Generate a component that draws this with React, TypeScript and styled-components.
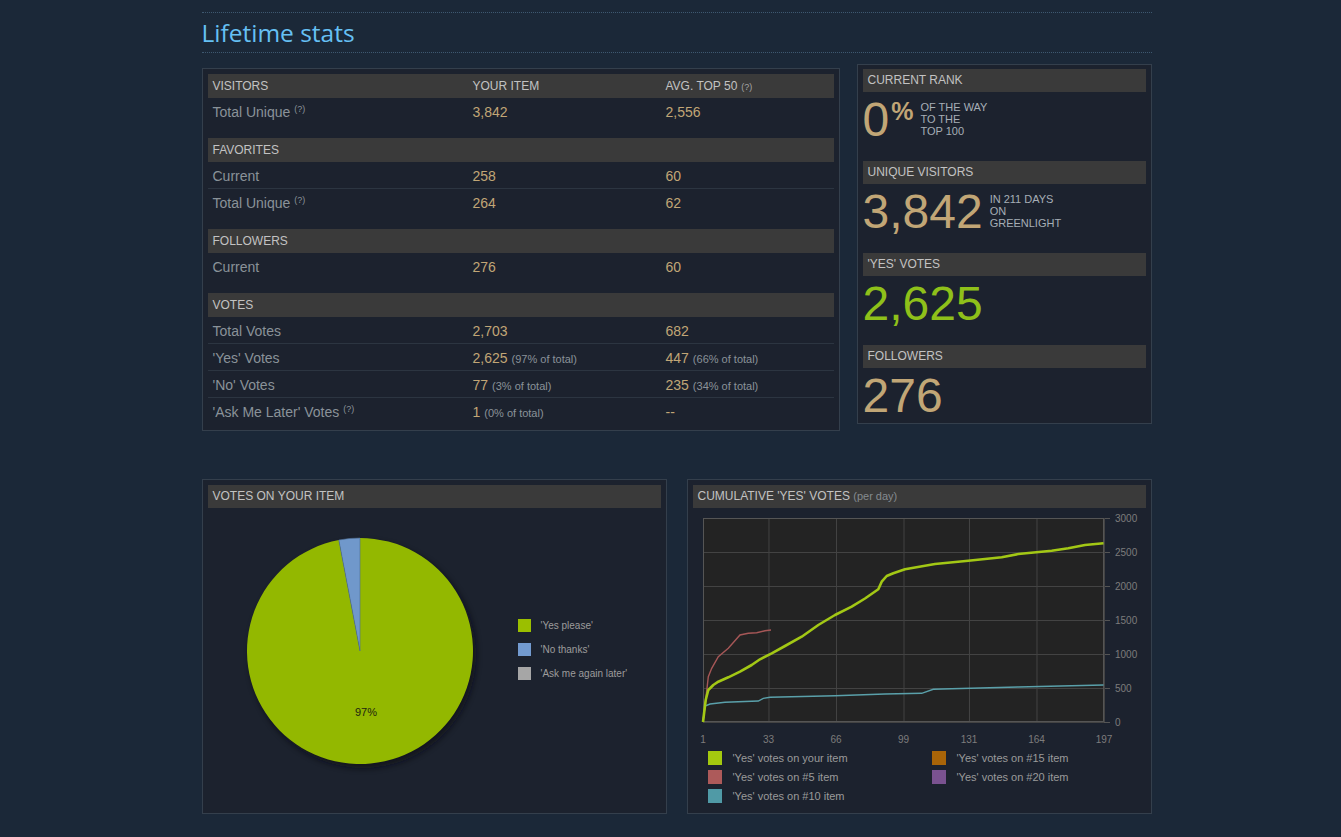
import React from 'react';
import styled, { createGlobalStyle } from 'styled-components';

const GlobalStyle = createGlobalStyle`
  body {
    margin: 0;
    background: #1b2838;
    font-family: "Liberation Sans", Arial, sans-serif;
  }
`;

//전체 페이지
const Page = styled.div`
  box-sizing: border-box;
  width: 962px;
  margin: 0 auto;
  padding: 12px 0 24px 12px;
`;

const TitleBar = styled.div`
  height: 39px;
  border-top: 1px dotted #3e5870;
  border-bottom: 1px dotted #3e5870;
`;

const Title = styled.h2`
  margin: 0;
  font-family: "Open Sans", "DejaVu Sans", sans-serif;
  font-size: 24.5px;
  font-weight: normal;
  line-height: 39px;
  color: #66c0f4;
`;

const TopRow = styled.div`
  display: grid;
  grid-template-columns: 638px 295px;
  justify-content: space-between;
  align-items: start;
  margin-top: 11px;
`;

const BottomRow = styled.div`
  display: grid;
  grid-template-columns: 465px 465px;
  justify-content: space-between;
  margin-top: 48px;
`;

const Panel = styled.section`
  box-sizing: border-box;
  border: 1px solid #343f4c;
  background: #1c222e;
  padding: 5px;
`;

const TablePanel = styled(Panel)`
  margin-top: 4px;
`;

const StatsPanel = styled(Panel)`
  padding-top: 4px;
`;

const ChartPanel = styled(Panel)`
  height: 335px;
`;

//회색 헤더 바
const Bar = styled.div<{ $h?: number }>`
  height: ${(p) => p.$h ?? 23}px;
  line-height: ${(p) => p.$h ?? 23}px;
  padding: 0 5px;
  background: #3a3a3a;
  color: #c2c2c2;
  font-size: 12px;
  text-transform: uppercase;
  white-space: nowrap;
`;

const TableBar = styled(Bar)`
  display: grid;
  grid-template-columns: 260px 193px 1fr;
`;

const PerDay = styled.span`
  font-size: 11px;
  color: #858a8f;
  text-transform: none;
`;

const Group = styled.div`
  & + & {
    margin-top: 13px;
  }
`;

const Row = styled.div`
  display: grid;
  grid-template-columns: 260px 193px 1fr;
  align-items: center;
  height: 26px;
  padding: 1px 5px 0;
  box-sizing: border-box;
  height: 27px;
  border-bottom: 1px solid #2c3541;
  &:last-child {
    border-bottom-color: transparent;
  }
`;

const Label = styled.span`
  font-size: 14px;
  color: #8a9299;
`;

const Hint = styled.span<{ $raised?: boolean }>`
  font-size: 9px;
  margin-left: 4px;
  color: ${(p) => (p.$raised ? '#8a9299' : '#a6a6a6')};
  vertical-align: ${(p) => (p.$raised ? '5px' : 'baseline')};
`;

const Value = styled.span`
  font-size: 14px;
  color: #c1a676;
`;

const Note = styled.span`
  font-size: 11px;
  margin-left: 4px;
  color: #8a9299;
`;

//오른쪽 요약 패널
const StatSection = styled.div`
  & + & {
    margin-top: 19px;
  }
`;

const StatBody = styled.div`
  display: flex;
  align-items: flex-start;
  height: 50px;
  padding-top: 2px;
  box-sizing: border-box;
`;

const BigNumber = styled.span<{ $color: string }>`
  font-size: 48px;
  line-height: 52px;
  color: ${(p) => p.$color};
`;

const Percent = styled.span`
  font-size: 25px;
  font-weight: bold;
  line-height: 24px;
  margin: 5px 0 0 2px;
  color: #c1a676;
`;

const SmallText = styled.div`
  margin: 7px 0 0 7px;
  font-size: 11px;
  line-height: 12px;
  color: #a6aeb6;
  text-transform: uppercase;
`;

//파이 차트
const PieBody = styled.div`
  display: flex;
  align-items: center;
  height: 300px;
  padding-bottom: 14px;
  box-sizing: border-box;
`;

const PieSvg = styled.svg`
  display: block;
  margin-left: 7px;
  flex: none;
`;

const PieLegend = styled.ul`
  list-style: none;
  margin: 0 0 4px 13px;
  padding: 0;
  display: flex;
  flex-direction: column;
  gap: 11px;
`;

const PieLegendItem = styled.li`
  display: flex;
  align-items: center;
  gap: 10px;
  font-size: 10px;
  color: #9c9c9c;
`;

const Swatch = styled.span<{ $color: string; $size: number }>`
  width: ${(p) => p.$size}px;
  height: ${(p) => p.$size}px;
  background: ${(p) => p.$color};
  flex: none;
`;

//누적 차트
const LineSvg = styled.svg`
  display: block;
`;

const LineLegend = styled.div`
  display: grid;
  grid-template-columns: 224px 1fr;
  grid-auto-rows: 19px;
  margin-top: 2px;
  padding-left: 15px;
`;

const LineLegendItem = styled.div`
  display: flex;
  align-items: center;
  gap: 11px;
  font-size: 11px;
  color: #9a9a9a;
`;

type TableRow = {
  label: string;
  hint?: boolean;
  mine: string;
  mineNote?: string;
  top: string;
  topNote?: string;
};

const groups: { title: string; rows: TableRow[] }[] = [
  { title: 'Visitors', rows: [{ label: 'Total Unique', hint: true, mine: '3,842', top: '2,556' }] },
  {
    title: 'Favorites',
    rows: [
      { label: 'Current', mine: '258', top: '60' },
      { label: 'Total Unique', hint: true, mine: '264', top: '62' },
    ],
  },
  { title: 'Followers', rows: [{ label: 'Current', mine: '276', top: '60' }] },
  {
    title: 'Votes',
    rows: [
      { label: 'Total Votes', mine: '2,703', top: '682' },
      { label: "'Yes' Votes", mine: '2,625', mineNote: '(97% of total)', top: '447', topNote: '(66% of total)' },
      { label: "'No' Votes", mine: '77', mineNote: '(3% of total)', top: '235', topNote: '(34% of total)' },
      { label: "'Ask Me Later' Votes", hint: true, mine: '1', mineNote: '(0% of total)', top: '--' },
    ],
  },
];

const green = [
  [703, 722], [705.7, 700], [708.3, 690], [713.3, 685], [718.3, 681.7], [728.3, 677.3],
  [740, 671.7], [751.7, 665], [760, 659.3], [771.7, 653.3], [785, 646], [801.7, 636.7],
  [818.3, 625], [835, 615], [851.7, 606.7], [865, 598.5], [878.3, 589.3], [881.7, 581.7],
  [886.7, 576], [893.3, 573.3], [905, 569.3], [935, 564], [968.3, 560.7], [1001.7, 557.3],
  [1018.3, 554], [1051.7, 550.7], [1068.3, 548.3], [1085, 545], [1103.5, 543.3],
];

const red = [
  [703, 721], [705.7, 700], [708.3, 676.7], [711.7, 668.3], [718.3, 656.7], [728.3, 648.3],
  [740, 635], [748.3, 633.3], [756.7, 632.7], [765, 630.7], [771, 630],
];

const teal = [
  [703, 722], [705, 706], [710, 704], [725, 702.3], [758.3, 701], [763.3, 698.3], [770, 697.3],
  [835, 695.7], [885, 694], [921.7, 693.3], [933.3, 689.3], [951.7, 688.7], [1018.3, 687],
  [1103.5, 685],
];

const pts = (list: number[][]) => list.map(([x, y]) => `${x},${y}`).join(' ');

const yTicks = [3000, 2500, 2000, 1500, 1000, 500, 0];
const xTicks = [1, 33, 66, 99, 131, 164, 197];
const dayX = (d: number) => 703 + ((d - 1) * 401) / 196;
const valY = (v: number) => 722 - (v * 204) / 3000;

const PieChart = () => {
  const cx = 360;
  const cy = 651;
  const r = 113;
  const a = 0.03 * 2 * Math.PI;
  const bx = cx - r * Math.sin(a);
  const by = cy - r * Math.cos(a);
  return (
    <PieSvg width={290} height={290} viewBox="215 506 290 290">
      <defs>
        <filter id="pieShadow" x="-20%" y="-20%" width="140%" height="140%">
          <feGaussianBlur stdDeviation="3" />
        </filter>
      </defs>
      <circle cx={cx + 3} cy={cy + 4} r={r} fill="#0b0e13" opacity={0.7} filter="url(#pieShadow)" />
      <path d={`M${cx},${cy} L${cx},${cy - r} A${r},${r} 0 1,1 ${bx},${by} Z`} fill="#93b800" />
      <path
        d={`M${cx},${cy} L${bx},${by} A${r},${r} 0 0,1 ${cx},${cy - r} Z`}
        fill="#7098cb"
        stroke="#4f6f96"
        strokeWidth={0.6}
      />
      <text x={366} y={716} textAnchor="middle" fontSize={11} fill="#1d2410" fontFamily="Liberation Sans, Arial, sans-serif">
        97%
      </text>
    </PieSvg>
  );
};

const LineChart = () => (
  <LineSvg width={453} height={238} viewBox="693 508 453 238">
    <rect x={703} y={518} width={401} height={204} fill="#232323" />
    {yTicks.map((v) => (
      <g key={v}>
        <line x1={703} x2={1104} y1={valY(v) + 0.5} y2={valY(v) + 0.5} stroke="#434343" />
        <line x1={1104} x2={1110} y1={valY(v) + 0.5} y2={valY(v) + 0.5} stroke="#555" />
        <text x={1115} y={valY(v) + 4} fontSize={10} fill="#7c7c7c" fontFamily="Liberation Sans, Arial, sans-serif">
          {v}
        </text>
      </g>
    ))}
    {xTicks.map((d) => (
      <g key={d}>
        <line x1={dayX(d) + 0.5} x2={dayX(d) + 0.5} y1={518} y2={722} stroke="#434343" />
        <text x={dayX(d)} y={743} textAnchor="middle" fontSize={10} fill="#7c7c7c" fontFamily="Liberation Sans, Arial, sans-serif">
          {d}
        </text>
      </g>
    ))}
    <rect x={703.5} y={518.5} width={400} height={203} fill="none" stroke="#555" />
    <polyline points={pts(teal)} fill="none" stroke="#5aa0aa" strokeWidth={1.4} />
    <polyline points={pts(red)} fill="none" stroke="#a65757" strokeWidth={1.4} />
    <polyline points={pts(green)} fill="none" stroke="#a3c815" strokeWidth={2.6} strokeLinejoin="round" />
  </LineSvg>
);

const lineLegend = [
  { color: '#a4c90f', text: "'Yes' votes on your item" },
  { color: '#a86408', text: "'Yes' votes on #15 item" },
  { color: '#ad5a5a', text: "'Yes' votes on #5 item" },
  { color: '#7a5290', text: "'Yes' votes on #20 item" },
  { color: '#509aa6', text: "'Yes' votes on #10 item" },
];

const App = () => {
  return (
    <Page>
      <GlobalStyle />
      <TitleBar>
        <Title>Lifetime stats</Title>
      </TitleBar>

      <TopRow>
        <TablePanel>
          {groups.map((g, i) => (
            <Group key={g.title}>
              {i === 0 ? (
                <TableBar $h={24}>
                  <span>{g.title}</span>
                  <span>Your Item</span>
                  <span>
                    Avg. Top 50<Hint>(?)</Hint>
                  </span>
                </TableBar>
              ) : (
                <Bar $h={24}>{g.title}</Bar>
              )}
              {g.rows.map((r) => (
                <Row key={r.label}>
                  <Label>
                    {r.label}
                    {r.hint && <Hint $raised>(?)</Hint>}
                  </Label>
                  <span>
                    <Value>{r.mine}</Value>
                    {r.mineNote && <Note>{r.mineNote}</Note>}
                  </span>
                  <span>
                    <Value>{r.top}</Value>
                    {r.topNote && <Note>{r.topNote}</Note>}
                  </span>
                </Row>
              ))}
            </Group>
          ))}
        </TablePanel>

        <StatsPanel>
          <StatSection>
            <Bar>Current Rank</Bar>
            <StatBody>
              <BigNumber $color="#c1a676">0</BigNumber>
              <Percent>%</Percent>
              <SmallText>
                Of the way
                <br />
                to the
                <br />
                top 100
              </SmallText>
            </StatBody>
          </StatSection>
          <StatSection>
            <Bar>Unique Visitors</Bar>
            <StatBody>
              <BigNumber $color="#c1a676">3,842</BigNumber>
              <SmallText>
                In 211 days
                <br />
                on
                <br />
                Greenlight
              </SmallText>
            </StatBody>
          </StatSection>
          <StatSection>
            <Bar>'Yes' Votes</Bar>
            <StatBody>
              <BigNumber $color="#8fc01a">2,625</BigNumber>
            </StatBody>
          </StatSection>
          <StatSection>
            <Bar>Followers</Bar>
            <StatBody>
              <BigNumber $color="#c1a676">276</BigNumber>
            </StatBody>
          </StatSection>
        </StatsPanel>
      </TopRow>

      <BottomRow>
        <ChartPanel>
          <Bar>Votes on your item</Bar>
          <PieBody>
            <PieChart />
            <PieLegend>
              <PieLegendItem>
                <Swatch $color="#9bbf00" $size={13} />
                'Yes please'
              </PieLegendItem>
              <PieLegendItem>
                <Swatch $color="#739bd0" $size={13} />
                'No thanks'
              </PieLegendItem>
              <PieLegendItem>
                <Swatch $color="#a6a6a6" $size={13} />
                'Ask me again later'
              </PieLegendItem>
            </PieLegend>
          </PieBody>
        </ChartPanel>

        <ChartPanel>
          <Bar>
            Cumulative 'Yes' Votes <PerDay>(per day)</PerDay>
          </Bar>
          <LineChart />
          <LineLegend>
            {lineLegend.map((l) => (
              <LineLegendItem key={l.text}>
                <Swatch $color={l.color} $size={14} />
                {l.text}
              </LineLegendItem>
            ))}
          </LineLegend>
        </ChartPanel>
      </BottomRow>
    </Page>
  );
};

export default App;
